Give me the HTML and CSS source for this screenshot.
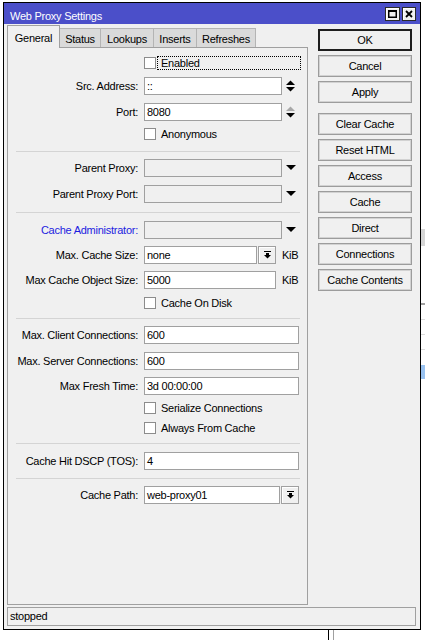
FILE: index.html
```html
<!DOCTYPE html>
<html>
<head>
<meta charset="utf-8">
<link rel="stylesheet" href="styles.css">
</head>
<body>
<div class="deco deco-gray"></div>
<div class="deco deco-line1"></div>
<div class="deco deco-line2"></div>
<div class="deco deco-line3"></div>
<div class="deco deco-line4"></div>
<div class="deco deco-blue"></div>
<div class="deco deco-v1"></div>
<div class="deco deco-v2"></div>
<div class="window">
  <div class="titlebar">
    <span class="title">Web Proxy Settings</span>
    <div class="tb-btns">
      <span class="tb-btn max"><svg width="9" height="8" viewBox="0 0 9 8"><rect x="0.75" y="1" width="7.5" height="6.25" fill="none" stroke="#000" stroke-width="1.5"/><rect x="0" y="0" width="9" height="2" fill="#000"/></svg></span>
      <span class="tb-btn close"><svg width="8" height="8" viewBox="0 0 8 8"><path d="M1 1L7 7M7 1L1 7" stroke="#000" stroke-width="1.8" fill="none"/></svg></span>
    </div>
  </div>
  <div class="body">
    <div class="left">
      <div class="tabs">
        <div class="tab active t-general">General</div>
        <div class="tab t-status">Status</div>
        <div class="tab t-lookups">Lookups</div>
        <div class="tab t-inserts">Inserts</div>
        <div class="tab t-refreshes">Refreshes</div>
      </div>
      <div class="panel">
        <div class="row h20"><span class="cb"></span><span class="focus">Enabled</span></div>
        <div class="row h26"><span class="label">Src. Address:</span><span class="input w138">::</span><svg class="spin" width="9" height="12" viewBox="0 0 9 12"><path d="M0 5L4.5 0.5L9 5Z" fill="#000"/><path d="M0 7L4.5 11.5L9 7Z" fill="#000"/></svg></div>
        <div class="row h25"><span class="label">Port:</span><span class="input w138">8080</span><svg class="spin" width="9" height="12" viewBox="0 0 9 12"><path d="M0 5L4.5 0.5L9 5Z" fill="#a8a8a8"/><path d="M0 7L4.5 11.5L9 7Z" fill="#000"/></svg></div>
        <div class="row h23"><span class="cb"></span><span class="cbtext">Anonymous</span></div>
        <div class="sep"></div>
        <div class="row h26"><span class="label">Parent Proxy:</span><span class="input w138 disabled"></span><svg class="dd" width="10" height="5" viewBox="0 0 10 5"><path d="M0 0H10L5 5Z" fill="#000"/></svg></div>
        <div class="row h27"><span class="label">Parent Proxy Port:</span><span class="input w138 disabled"></span><svg class="dd" width="10" height="5" viewBox="0 0 10 5"><path d="M0 0H10L5 5Z" fill="#000"/></svg></div>
        <div class="sep sep9"></div>
        <div class="row h25"><span class="label blue">Cache Administrator:</span><span class="input w138 disabled"></span><svg class="dd" width="10" height="5" viewBox="0 0 10 5"><path d="M0 0H10L5 5Z" fill="#000"/></svg></div>
        <div class="row h25"><span class="label">Max. Cache Size:</span><span class="input w113">none</span><span class="sbtn"><svg width="7" height="8" viewBox="0 0 7 8"><rect x="0" y="0" width="7" height="1" fill="#000"/><rect x="2" y="2" width="3" height="2" fill="#000"/><path d="M0 4H7L3.5 7.5Z" fill="#000"/></svg></span><span class="unit">KiB</span></div>
        <div class="row h26"><span class="label">Max Cache Object Size:</span><span class="input w132">5000</span><span class="unit">KiB</span></div>
        <div class="row h21"><span class="cb"></span><span class="cbtext">Cache On Disk</span></div>
        <div class="sep"></div>
        <div class="row h26"><span class="label">Max. Client Connections:</span><span class="input w155">600</span></div>
        <div class="row h25"><span class="label">Max. Server Connections:</span><span class="input w155">600</span></div>
        <div class="row h25"><span class="label">Max Fresh Time:</span><span class="input w155">3d 00:00:00</span></div>
        <div class="row h20"><span class="cb"></span><span class="cbtext">Serialize Connections</span></div>
        <div class="row h21"><span class="cb"></span><span class="cbtext">Always From Cache</span></div>
        <div class="sep sep9"></div>
        <div class="row h26"><span class="label">Cache Hit DSCP (TOS):</span><span class="input w155">4</span></div>
        <div class="sep"></div>
        <div class="row h18"><span class="label">Cache Path:</span><span class="input w136">web-proxy01</span><span class="sbtn"><svg width="7" height="8" viewBox="0 0 7 8"><rect x="0" y="0" width="7" height="1" fill="#000"/><rect x="2" y="2" width="3" height="2" fill="#000"/><path d="M0 4H7L3.5 7.5Z" fill="#000"/></svg></span></div>
      </div>
    </div>
    <div class="buttons">
      <div class="btn default">OK</div>
      <div class="btn">Cancel</div>
      <div class="btn">Apply</div>
      <div class="btn gap">Clear Cache</div>
      <div class="btn">Reset HTML</div>
      <div class="btn">Access</div>
      <div class="btn">Cache</div>
      <div class="btn">Direct</div>
      <div class="btn">Connections</div>
      <div class="btn">Cache Contents</div>
    </div>
  </div>
  <div class="status">stopped</div>
</div>
</body>
</html>
```
FILE: styles.css
```css
body {
  margin: 0;
  width: 425px;
  height: 640px;
  overflow: hidden;
  position: relative;
  background: #fff;
  font-family: "Liberation Sans", Arial, sans-serif;
  font-size: 11px;
  letter-spacing: -0.25px;
  color: #000;
}

.deco { position: absolute; }
.deco-gray { left: 421px; top: 229px; width: 4px; height: 17px; background: #d6d6d6; }
.deco-line1 { left: 421px; top: 303px; width: 4px; height: 2px; background: #a0a0a0; }
.deco-line2 { left: 421px; top: 319px; width: 4px; height: 1px; background: #dcdcdc; }
.deco-line3 { left: 421px; top: 334px; width: 4px; height: 1px; background: #dcdcdc; }
.deco-line4 { left: 421px; top: 349px; width: 4px; height: 1px; background: #dcdcdc; }
.deco-blue { left: 421px; top: 365px; width: 4px; height: 14px; background: #99c2f0; }
.deco-v1 { left: 328px; top: 630px; width: 1px; height: 10px; background: #000; }
.deco-v2 { left: 333px; top: 630px; width: 1px; height: 10px; background: #a0a0a0; }

.window {
  box-sizing: border-box;
  width: 418px;
  height: 628px;
  margin: 2px 0 0 3px;
  border: 1px solid #000;
  background: #f0f0f0;
  display: flex;
  flex-direction: column;
  position: relative;
}

.titlebar {
  height: 21px;
  flex: none;
  background: #4b4fc9;
  color: #fff;
  display: flex;
  align-items: flex-start;
  padding-left: 6px;
}
.title { flex: 1; line-height: 14px; margin-top: 6px; }
.tb-btns { display: flex; gap: 2px; margin: 4px 4px 0 0; }
.tb-btn {
  box-sizing: border-box;
  width: 15px;
  height: 14px;
  border: 1px solid #2a2a2a;
  background: #f0f0f0;
  box-shadow: inset 1px 1px 0 #fff;
  display: flex;
  align-items: center;
  justify-content: center;
}
.tb-btn.close { width: 14px; }

.body { display: flex; padding: 1px 0 0 3px; flex: none; }
.left { width: 301px; }

.tabs { display: flex; height: 22px; align-items: flex-end; position: relative; z-index: 1; }
.tab {
  box-sizing: border-box;
  height: 19px;
  border: 1px solid #b4b4b4;
  border-bottom: none;
  background: #dadada;
  text-align: center;
  margin-left: -1px;
  padding-top: 4px;
  line-height: 13px;
}
.tab.active {
  height: 23px;
  margin-bottom: -1px;
  margin-left: 0;
  background: #f0f0f0;
  border-color: #a0a0a0;
  padding-top: 5px;
  line-height: 14px;
  position: relative;
  z-index: 2;
}
.t-general { width: 53px; }
.t-status { width: 42px; }
.t-lookups { width: 54px; }
.t-inserts { width: 44px; }
.t-refreshes { width: 60px; }

.panel {
  box-sizing: border-box;
  height: 558px;
  border: 1px solid #a0a0a0;
  padding-top: 9px;
}

.row { display: flex; align-items: flex-start; }
.h18 { height: 18px; }
.h20 { height: 20px; }
.h21 { height: 21px; }
.h23 { height: 23px; }
.h25 { height: 25px; }
.h26 { height: 26px; }
.h27 { height: 27px; }

.label {
  width: 130px;
  margin-right: 6px;
  text-align: right;
  line-height: 18px;
  height: 18px;
  white-space: nowrap;
  flex: none;
}
.label.blue { color: #1c1ce0; }

.input {
  box-sizing: border-box;
  height: 18px;
  border: 1px solid #a0a0a0;
  background: #fff;
  line-height: 16px;
  padding-left: 2px;
  flex: none;
  white-space: nowrap;
}
.input.disabled { background: #f0f0f0; }
.w113 { width: 113px; }
.w132 { width: 132px; }
.w136 { width: 136px; }
.w138 { width: 138px; }
.w155 { width: 155px; }

.spin { margin: 3px 0 0 4px; flex: none; }
.dd { margin: 6px 0 0 4px; flex: none; }

.sbtn {
  box-sizing: border-box;
  width: 18px;
  height: 18px;
  margin-left: 1px;
  border: 1px solid #a0a0a0;
  background: #f0f0f0;
  box-shadow: inset 1px 1px 0 #fff;
  display: flex;
  align-items: center;
  justify-content: center;
  flex: none;
}
.unit { margin-left: 6px; line-height: 18px; }

.cb {
  box-sizing: border-box;
  width: 12px;
  height: 12px;
  margin-left: 136px;
  border: 1px solid #8c8c8c;
  background: #fff;
  flex: none;
}
.cbtext { margin-left: 5px; line-height: 12px; white-space: nowrap; }
.focus {
  box-sizing: border-box;
  width: 144px;
  height: 14px;
  margin: -1px 0 0 1px;
  border: 1px dotted #000;
  padding-left: 3px;
  line-height: 12px;
}

.sep {
  height: 7px;
  margin: 0 7px 0 8px;
  border-top: 1px solid #d4d4d4;
}
.sep9 { height: 8px; }

.buttons {
  width: 94px;
  margin: 4px 0 0 10px;
  display: flex;
  flex-direction: column;
  gap: 4px;
}
.btn {
  box-sizing: border-box;
  height: 22px;
  border: 1px solid #9c9c9c;
  background: #f0f0f0;
  box-shadow: inset 0 0 0 1px #d2d2d2;
  text-align: center;
  padding-top: 1px;
  line-height: 19px;
  white-space: nowrap;
}
.btn.default { border: 2px solid #1e1e1e; box-shadow: none; line-height: 17px; }
.btn.gap { margin-top: 6px; }

.status {
  box-sizing: border-box;
  height: 19px;
  margin: 2px 4px 0 3px;
  border: 1px solid #a0a0a0;
  padding-left: 2px;
  line-height: 17px;
  flex: none;
}
```
